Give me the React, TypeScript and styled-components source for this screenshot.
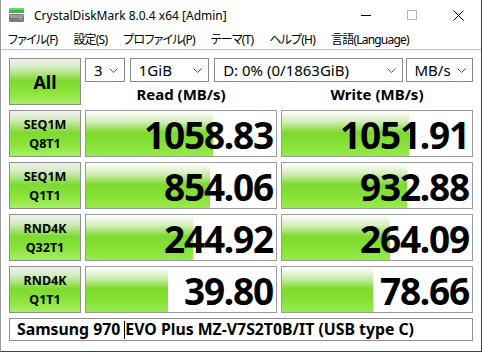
import React from 'react';
import styled, { createGlobalStyle } from 'styled-components';

const GlobalStyle = createGlobalStyle`
	html, body {
		margin: 0;
		padding: 0;
		background: #ffffff;
	}
	* {
		box-sizing: border-box;
	}
`;

const UI_FONT = `"Noto Sans", "Noto Sans CJK JP", sans-serif`;

const Window = styled.div`
	width: 482px;
	height: 352px;
	background: #ffffff;
	border-left: 1px solid #9a9a9a;
	border-right: 1px solid #1f4a6b;
	border-bottom: 1px solid #1f4a6b;
	font-family: ${ UI_FONT };
	color: #000;
	display: flex;
	flex-direction: column;
	overflow: hidden;
`;

const TitleBar = styled.div`
	height: 30px;
	display: flex;
	flex-direction: row;
	align-items: center;
	padding-left: 7px;
`;

const TitleText = styled.span`
	font-size: 12px;
	margin-left: 9px;
	flex: 1;
	white-space: nowrap;
`;

const Controls = styled.div`
	display: flex;
	flex-direction: row;
	height: 30px;
`;

const ControlButton = styled.div`
	width: 46px;
	height: 30px;
	display: flex;
	align-items: center;
	justify-content: center;
`;

const MenuBar = styled.div`
	height: 20px;
	display: flex;
	flex-direction: row;
	align-items: center;
	gap: 16px;
	padding-left: 7px;
	font-size: 12px;
	font-feature-settings: "palt" 1;
	letter-spacing: -0.8px;
	border-bottom: 1px solid #bdbdbd;
	white-space: nowrap;
`;

const MenuItem = styled.span`
	line-height: 20px;
`;

const Board = styled.div`
	display: grid;
	grid-template-columns: 72px 192px 192px;
	grid-template-rows: 47px repeat(4, 47px) 23px;
	column-gap: 4px;
	row-gap: 5px;
	padding: 8px 0 0 8px;
`;

const GREEN = `linear-gradient(to bottom,
	#f2f2f2 0%,
	#cdeab4 22%,
	#7fd932 48%,
	#86e236 70%,
	#a6f062 100%)`;

const LabelButton = styled.div<{ $big?: boolean }>`
	border: 1px solid #8f8f8f;
	background: ${ GREEN };
	display: flex;
	flex-direction: column;
	align-items: center;
	justify-content: center;
	font-weight: 700;
	font-size: ${ p => p.$big ? '18px' : '12.5px' };
	line-height: ${ p => p.$big ? '22px' : '19px' };
	padding-top: ${ p => p.$big ? '0' : '1px' };
`;

const HeadArea = styled.div`
	grid-column: 2 / 4;
	display: flex;
	flex-direction: column;
`;

const SelectRow = styled.div`
	display: flex;
	flex-direction: row;
	height: 24px;
	gap: 5px;
`;

const Select = styled.div<{ $w: number }>`
	width: ${ p => p.$w }px;
	height: 24px;
	border: 1px solid #8a8a8a;
	background: #fff;
	display: flex;
	flex-direction: row;
	align-items: center;
	justify-content: space-between;
	padding: 0 6px 0 8px;
	font-size: 15px;
	white-space: nowrap;
`;

const HeadLabels = styled.div`
	display: grid;
	grid-template-columns: 192px 192px;
	column-gap: 4px;
	flex: 1;
`;

const HeadLabel = styled.div`
	display: flex;
	align-items: center;
	justify-content: center;
	font-weight: 700;
	font-size: 15px;
	padding-top: 1px;
`;

const ValueBox = styled.div`
	position: relative;
	border: 1px solid #9a9a9a;
	background: #fff;
`;

const ValueBar = styled.div`
	position: absolute;
	left: 0;
	top: 0;
	bottom: 0;
	background: linear-gradient(to bottom,
		#ffffff 0%,
		#d6efc0 22%,
		#7fd930 48%,
		#84e034 70%,
		#98ea4c 100%);
`;

const ValueText = styled.div`
	position: relative;
	height: 100%;
	display: flex;
	align-items: center;
	justify-content: flex-end;
	padding: 2px 3px 0 0;
	font-weight: 700;
	font-size: 37px;
	letter-spacing: -1.2px;
	line-height: 45px;
`;

const NameBox = styled.div`
	grid-column: 1 / 4;
	border: 1px solid #8f8f8f;
	background: #fff;
	padding-left: 7px;
	font-weight: 700;
	font-size: 15.8px;
	line-height: 21px;
	white-space: pre;
`;

const Caret = styled.span`
	display: inline-block;
	width: 1px;
	height: 18px;
	background: #000;
	vertical-align: -4px;
`;

const Chevron = () => (
	<svg width="9" height="5" viewBox="0 0 9 5">
		<path d="M0.5 0.5 L4.5 4.5 L8.5 0.5" fill="none" stroke="#555" strokeWidth="1" />
	</svg>
);

const DiskIcon = () => (
	<svg width="17" height="16" viewBox="0 0 17 16">
		<rect x="1" y="1" width="15" height="5" fill="#3cb54a" />
		<rect x="1" y="1" width="15" height="2" fill="#6fd36a" />
		<rect x="1" y="7" width="15" height="8" rx="1.5" fill="#7a7a7a" />
		<rect x="2" y="8" width="13" height="3" fill="#9b9b9b" />
		<rect x="11" y="11.5" width="3" height="1.5" fill="#4ddc4d" />
	</svg>
);

interface Row {
	label: [string, string];
	read: string;
	readPct: number;
	write: string;
	writePct: number;
}

const rows: Row[] = [
	{ label: [ 'SEQ1M', 'Q8T1' ], read: '1058.83', readPct: 67, write: '1051.91', writePct: 67 },
	{ label: [ 'SEQ1M', 'Q1T1' ], read: '854.06', readPct: 65, write: '932.88', writePct: 66 },
	{ label: [ 'RND4K', 'Q32T1' ], read: '244.92', readPct: 56.5, write: '264.09', writePct: 57 },
	{ label: [ 'RND4K', 'Q1T1' ], read: '39.80', readPct: 43, write: '78.66', writePct: 48 },
];

const menu = [ 'ファイル(F)', '設定(S)', 'プロファイル(P)', 'テーマ(T)', 'ヘルプ(H)', '言語(Language)' ];

const Value: React.FC<{ value: string; pct: number }> = ({ value, pct }) => (
	<ValueBox>
		<ValueBar style={{ width: `${ pct }%` }} />
		<ValueText>{ value }</ValueText>
	</ValueBox>
);

const App: React.FC = () => {
	return (
		<>
			<GlobalStyle />
			<Window>
				<TitleBar>
					<DiskIcon />
					<TitleText>CrystalDiskMark 8.0.4 x64 [Admin]</TitleText>
					<Controls>
						<ControlButton>
							<svg width="10" height="10" viewBox="0 0 10 10">
								<path d="M0 5.5 H10" stroke="#000" strokeWidth="1" />
							</svg>
						</ControlButton>
						<ControlButton>
							<svg width="10" height="10" viewBox="0 0 10 10">
								<rect x="0.5" y="0.5" width="9" height="9" fill="none" stroke="#b4b4b4" strokeWidth="1" />
							</svg>
						</ControlButton>
						<ControlButton>
							<svg width="11" height="11" viewBox="0 0 11 11">
								<path d="M0.5 0.5 L10.5 10.5 M10.5 0.5 L0.5 10.5" stroke="#000" strokeWidth="1" />
							</svg>
						</ControlButton>
					</Controls>
				</TitleBar>
				<MenuBar>
					{ menu.map(m => <MenuItem key={ m }>{ m }</MenuItem>) }
				</MenuBar>
				<Board>
					<LabelButton $big>All</LabelButton>
					<HeadArea>
						<SelectRow>
							<Select $w={ 40 }><span>3</span><Chevron /></Select>
							<Select $w={ 80 }><span>1GiB</span><Chevron /></Select>
							<Select $w={ 190 }><span>D: 0% (0/1863GiB)</span><Chevron /></Select>
							<Select $w={ 68 } style={{ marginLeft: -2 }}><span>MB/s</span><Chevron /></Select>
						</SelectRow>
						<HeadLabels>
							<HeadLabel>Read (MB/s)</HeadLabel>
							<HeadLabel>Write (MB/s)</HeadLabel>
						</HeadLabels>
					</HeadArea>
					{ rows.map(r => (
						<React.Fragment key={ r.label.join() }>
							<LabelButton>
								<span>{ r.label[0] }</span>
								<span>{ r.label[1] }</span>
							</LabelButton>
							<Value value={ r.read } pct={ r.readPct } />
							<Value value={ r.write } pct={ r.writePct } />
						</React.Fragment>
					)) }
					<NameBox>
						Samsung 970 <Caret />EVO Plus MZ-V7S2T0B/IT (USB type C)
					</NameBox>
				</Board>
			</Window>
		</>
	);
};

export default App;
